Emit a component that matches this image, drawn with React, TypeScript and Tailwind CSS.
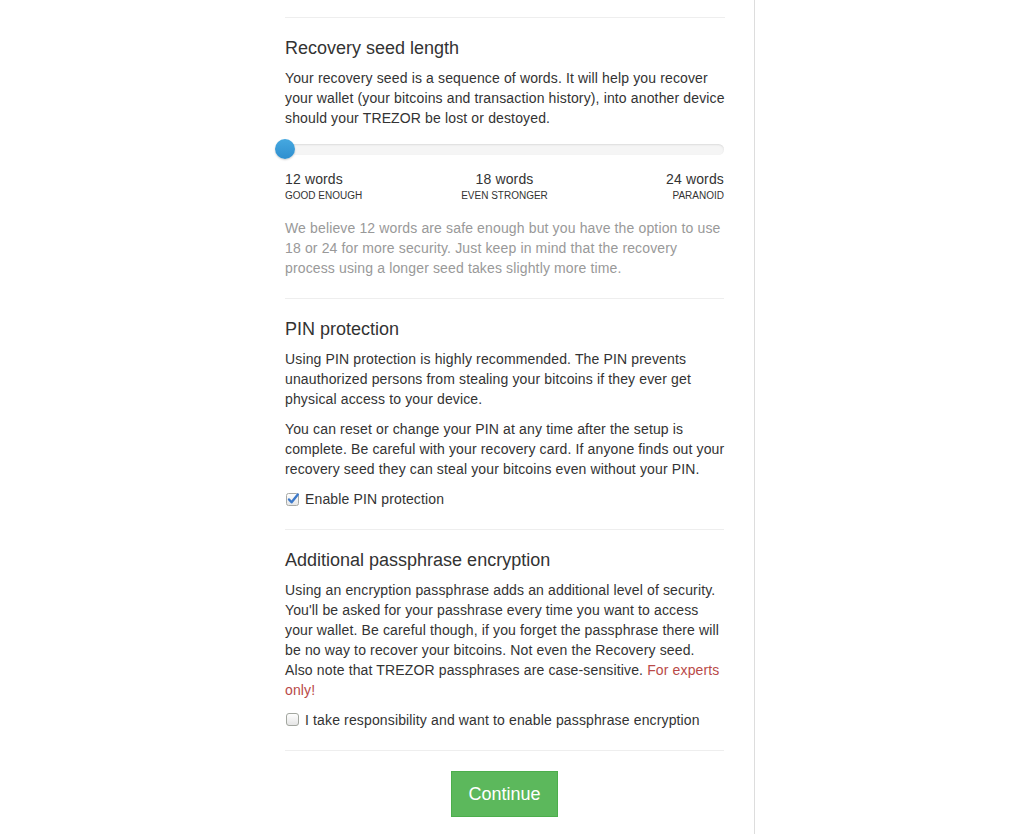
import React from "react";

function CheckedBox() {
  return (
    <svg width="14" height="14" viewBox="0 0 14 14" className="shrink-0">
      <defs>
        <linearGradient id="cbg" x1="0" y1="0" x2="0" y2="1">
          <stop offset="0" stopColor="#ffffff" />
          <stop offset="1" stopColor="#e6e6e6" />
        </linearGradient>
      </defs>
      <rect x="0.5" y="1.5" width="12" height="12" rx="2" fill="url(#cbg)" stroke="#a8aaa6" />
      <path d="M3 7.5 L5.6 10.3 L11.8 2.5" fill="none" stroke="#3d79c9" strokeWidth="2.4" strokeLinecap="round" strokeLinejoin="round" />
    </svg>
  );
}

function UncheckedBox() {
  return (
    <svg width="14" height="14" viewBox="0 0 14 14" className="shrink-0">
      <defs>
        <linearGradient id="ucbg" x1="0" y1="0" x2="0" y2="1">
          <stop offset="0" stopColor="#ffffff" />
          <stop offset="1" stopColor="#e4e4e4" />
        </linearGradient>
      </defs>
      <rect x="0.5" y="0.5" width="12" height="12" rx="2.5" fill="url(#ucbg)" stroke="#a3a7a0" />
    </svg>
  );
}

function Hr({ className = "" }: { className?: string }) {
  return <div className={"border-t border-[#eeeeee] " + className} />;
}

export default function App() {
  return (
    <div
      className="min-h-[834px] bg-white text-[#333333] text-[14px] leading-[20px] tracking-[0.14px]"
      style={{ fontFamily: '"Liberation Sans", Arial, sans-serif' }}
    >
      <div className="flex">
        <div className="w-[255px] shrink-0" />
        <div className="w-[500px] shrink-0 border-r border-[#dddddd] pl-[30px] pr-[29px] pt-[17px] pb-[20px] min-h-[834px]">
          <Hr />
          <h4 className="mt-[20px] text-[18px] leading-[20px] font-normal tracking-normal">Recovery seed length</h4>
          <p className="mt-[10px]">
            Your recovery seed is a sequence of words. It will help you recover your wallet (your bitcoins and transaction history), into another device should your TREZOR be lost or destoyed.
          </p>
          <div className="relative mt-[11px] h-[20px]">
            <div className="absolute left-0 right-px top-[5px] h-[11px] rounded-[6px] bg-[#f5f5f5] shadow-[inset_0_1px_2px_rgba(0,0,0,0.1)]" />
            <div className="absolute left-[-10px] top-0 h-[20px] w-[20px] rounded-full bg-gradient-to-b from-[#45a8e0] to-[#2f8fcf] shadow-[0_1px_2px_rgba(0,0,0,0.2)]" />
          </div>
          <div className="mt-[10px] grid grid-cols-3 pr-px">
            <div className="text-left">
              <div>12 words</div>
              <div className="text-[10px] leading-[14px] uppercase tracking-normal">Good enough</div>
            </div>
            <div className="text-center">
              <div>18 words</div>
              <div className="text-[10px] leading-[14px] uppercase tracking-normal">Even stronger</div>
            </div>
            <div className="text-right">
              <div>24 words</div>
              <div className="text-[10px] leading-[14px] uppercase tracking-normal">Paranoid</div>
            </div>
          </div>
          <p className="mt-[15px] text-[#999999]">
            We believe 12 words are safe enough but you have the option to use 18 or 24 for more security. Just keep in mind that the recovery process using a longer seed takes slightly more time.
          </p>
          <Hr className="mt-[20px] mr-px" />
          <h4 className="mt-[20px] text-[18px] leading-[20px] font-normal tracking-normal">PIN protection</h4>
          <p className="mt-[10px]">
            Using PIN protection is highly recommended. The PIN prevents unauthorized persons from stealing your bitcoins if they ever get physical access to your device.
          </p>
          <p className="mt-[10px]">
            You can reset or change your PIN at any time after the setup is complete. Be careful with your recovery card. If anyone finds out your recovery seed they can steal your bitcoins even without your PIN.
          </p>
          <label className="mt-[10px] flex items-center gap-[5px] pl-px">
            <CheckedBox />
            <span>Enable PIN protection</span>
          </label>
          <Hr className="mt-[20px] mr-px" />
          <h4 className="mt-[20px] text-[18px] leading-[20px] font-normal tracking-normal">Additional passphrase encryption</h4>
          <p className="mt-[10px]">
            Using an encryption passphrase adds an additional level of security. You'll be asked for your passhrase every time you want to access your wallet. Be careful though, if you forget the passphrase there will be no way to recover your bitcoins. Not even the Recovery seed. Also note that TREZOR passphrases are case-sensitive.{" "}
            <span className="text-[#b94a48]">For experts only!</span>
          </p>
          <label className="mt-[10px] flex items-center gap-[5px] pl-px">
            <UncheckedBox />
            <span>I take responsibility and want to enable passphrase encryption</span>
          </label>
          <Hr className="mt-[20px] mr-px" />
          <div className="mt-[20px] flex justify-center pr-px">
            <button className="border border-[#4cae4c] bg-[#5cb85c] px-[16px] py-[10px] text-[18px] leading-[24px] text-white tracking-normal">
              Continue
            </button>
          </div>
        </div>
        <div className="flex-1" />
      </div>
    </div>
  );
}
